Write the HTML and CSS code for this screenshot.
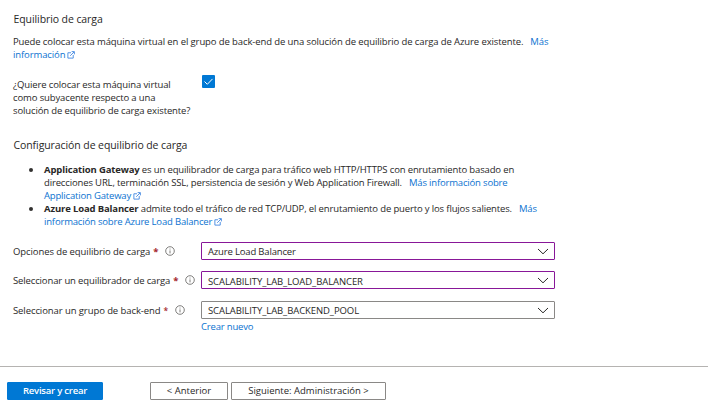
FILE: index.html
```html
<!DOCTYPE html>
<html lang="es">
<head>
<meta charset="utf-8">
<title>Equilibrio de carga</title>
<link rel="stylesheet" href="styles.css">
</head>
<body>
<svg class="defs" aria-hidden="true">
  <symbol id="ext" viewBox="0 0 9 9"><path d="M4.5 2H1v6h6V4.5M3.6 5.4 8 1M5.2.7h3.1v3.1"/></symbol>
  <symbol id="info" viewBox="0 0 10 10"><circle cx="5" cy="5" r="4.3"/><path d="M5 4.4v3M5 2.6v.9"/></symbol>
  <symbol id="chev" viewBox="0 0 12 7"><path d="m1 1 5 4.8L11 1"/></symbol>
</svg>
<main class="content">
  <h2 class="title">Equilibrio de carga</h2>
  <p class="intro"><span>Puede colocar esta máquina virtual en el grupo de back-end de una solución de equilibrio de carga de Azure existente.</span><a class="more">Más</a><br><a>información<svg class="ext"><use href="#ext"/></svg></a></p>
  <div class="question">
    <p class="question-text">¿Quiere colocar esta máquina virtual<br>como subyacente respecto a una<br>solución de equilibrio de carga existente?</p>
    <span class="checkbox"><svg viewBox="0 0 13 13"><path d="m2.5 6.5 2.8 2.8 5.2-5.4"/></svg></span>
  </div>
  <h2 class="title config">Configuración de equilibrio de carga</h2>
  <ul class="list">
    <li><b>Application Gateway</b> es un equilibrador de carga para tráfico web HTTP/HTTPS con enrutamiento basado en<br>direcciones URL, terminación SSL, persistencia de sesión y Web Application Firewall.<a class="more">Más información sobre</a><br><a>Application Gateway<svg class="ext"><use href="#ext"/></svg></a></li>
    <li><b>Azure Load Balancer</b> admite todo el tráfico de red TCP/UDP, el enrutamiento de puerto y los flujos salientes.<a class="more">Más</a><br><a>información sobre Azure Load Balancer<svg class="ext"><use href="#ext"/></svg></a></li>
  </ul>
  <div class="form">
    <div class="row"><span class="label">Opciones de equilibrio de carga<i>*</i><svg class="info"><use href="#info"/></svg></span><div class="select edited"><span class="tight">Azure Load Balancer</span><svg class="chev"><use href="#chev"/></svg></div></div>
    <div class="row"><span class="label narrow">Seleccionar un equilibrador de carga<i>*</i><svg class="info"><use href="#info"/></svg></span><div class="select edited"><span class="low">SCALABILITY_LAB_LOAD_BALANCER</span><svg class="chev"><use href="#chev"/></svg></div></div>
    <div class="row"><span class="label">Seleccionar un grupo de back-end<i class="light">*</i><svg class="info"><use href="#info"/></svg></span><div class="select"><span>SCALABILITY_LAB_BACKEND_POOL</span><svg class="chev"><use href="#chev"/></svg></div></div>
    <a class="new">Crear nuevo</a>
  </div>
</main>
<footer class="footer">
  <button class="btn primary">Revisar y crear</button>
  <button class="btn prev">&lt; Anterior</button>
  <button class="btn next">Siguiente: Administración &gt;</button>
</footer>
</body>
</html>
```
FILE: styles.css
```css
* { box-sizing: border-box; }
body { margin: 0; height: 417px; overflow: hidden; background: #fff; color: #292827; font: 9.5px/13px "Open Sans", "Noto Sans", sans-serif; white-space: nowrap; }
p, h2, ul { margin: 0; padding: 0; }
svg { fill: none; stroke: currentColor; }
.defs { position: absolute; width: 0; height: 0; }
a { color: #0b72d0; }
.content { height: 366px; padding: 12px 0 0 13px; }
.title { padding-left: .5px; font-size: 10.5px; font-weight: 400; line-height: 14px; letter-spacing: -.085px; }
.intro { margin-top: 9px; letter-spacing: -.107px; }
.more { margin-left: 7px; }
.ext { width: 8px; height: 8px; margin-left: 2px; vertical-align: -.5px; color: #3f86e0; stroke-width: 1; }
.question { display: flex; margin-top: 17px; height: 39px; }
.question-text { width: 189px; letter-spacing: -.12px; }
.checkbox { width: 13px; height: 13px; margin-top: -3px; border-radius: 1px; background: #0078d4; color: #fff; }
.checkbox svg { display: block; width: 13px; height: 13px; }
.config { margin-top: 21px; }
.list { margin-top: 11px; padding-left: 31px; list-style: none; letter-spacing: -.142px; }
.list a { letter-spacing: -.175px; }
.list li { position: relative; }
.list li::before { content: ""; position: absolute; left: -15px; top: 5px; width: 4px; height: 4px; border-radius: 50%; background: #323130; }
.form { margin-top: 14px; letter-spacing: -.085px; }
.row { display: flex; height: 18px; margin-bottom: 11px; align-items: center; }
.row:nth-child(2) { margin-bottom: 12px; }
.label { display: flex; width: 188px; align-items: center; }
.narrow { letter-spacing: -.13px; }
.label i { margin-left: 3px; color: #a4262c; font-style: normal; font-weight: 700; }
.label .light { font-weight: 600; font-size: 8.5px; }
.info { width: 10px; height: 10px; margin-left: 6.5px; color: #605e5c; stroke-width: .8; }
.select { display: flex; width: 354px; height: 18px; padding: 0 5px 0 6px; border: 1px solid #8a8886; border-radius: 1px; align-items: center; justify-content: space-between; }
.edited { border-color: #881798; }
.tight { letter-spacing: -.17px; }
.low { padding-top: 2px; }
.chev { width: 12px; height: 7px; }
.new { display: block; margin: -10px 0 0 188px; letter-spacing: -.17px; }
.footer { display: flex; height: 51px; padding: 15px 0 0 7px; border-top: 1px solid #b5b3b1; }
.btn { height: 18px; padding: 0; border: 1px solid #8a8886; border-radius: 1px; background: #fff; color: #292827; font: inherit; line-height: 16px; }
.primary { width: 96px; margin-right: 47px; border-color: #0078d4; background: #0078d4; color: #fff; font-weight: 600; letter-spacing: -.22px; }
.prev { width: 78px; margin-right: 3px; }
.next { width: 155px; }
```
